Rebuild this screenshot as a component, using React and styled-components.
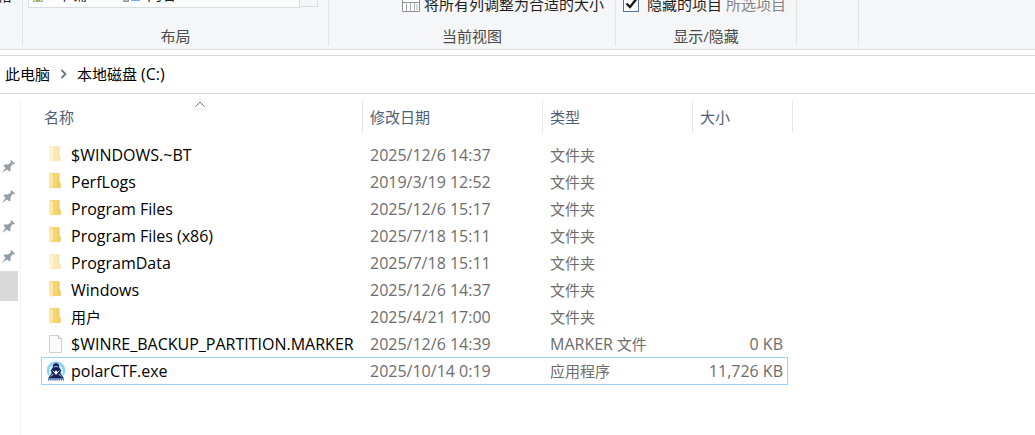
import { useState } from "react";
import styled, { createGlobalStyle } from "styled-components";

const GlobalStyle = createGlobalStyle`
  * {
    box-sizing: border-box;
  }
  body {
    margin: 0;
    background: #fff;
    color: #000;
    font-family: "Open Sans", "Noto Sans CJK SC", sans-serif;
    font-size: 15px;
    line-height: 20px;
  }
`;

const Window = styled.div`
  display: flex;
  flex-direction: column;
  min-height: 100vh;
  overflow: hidden;
`;

// 功能区
const Ribbon = styled.div`
  display: flex;
  height: 50px;
  padding-bottom: 3px;
  overflow: hidden;
  background: #f5f6f7;
  border-bottom: 1px solid #dadbdc;
`;

const Group = styled.section`
  display: flex;
  flex-direction: column;
  justify-content: flex-end;
  flex: 0 0 ${(props) => props.$width}px;
  min-width: 0;
  border-right: 1px solid #e2e3e4;
`;

const GroupBody = styled.div`
  display: flex;
  align-items: flex-end;
  justify-content: ${(props) => (props.$end ? "flex-end" : "flex-start")};
  padding: 0 10px 0 ${(props) => props.$indent || 0}px;
  margin-bottom: ${(props) => props.$gap || 12}px;
  white-space: nowrap;
`;

const GroupLabel = styled.div`
  height: 20px;
  text-align: center;
  color: #4a4a4a;
`;

const PaneButton = styled.button`
  flex: none;
  padding: 0;
  border: 0;
  background: none;
  color: #1e1e1e;
  font: inherit;
`;

const Gallery = styled.div`
  display: flex;
  align-items: flex-end;
  flex: 1;
  height: 30px;
  padding: 0 0 3px 4px;
  background: #fbfcfd;
  border: 1px solid #dadbdc;
`;

const GalleryItem = styled.button`
  display: flex;
  align-items: center;
  gap: 6px;
  width: 90px;
  height: 20px;
  padding: 0;
  border: 0;
  background: none;
  color: #1e1e1e;
  font: inherit;
`;

const GalleryScroll = styled.button`
  width: 18px;
  height: 29px;
  margin-bottom: 1px;
  padding: 0;
  border: 1px solid #dadbdc;
  border-left: 0;
  background: #f5f6f7;
`;

const ToolButton = styled.button`
  display: flex;
  align-items: center;
  gap: 4px;
  height: 20px;
  padding: 0;
  border: 0;
  background: none;
  color: ${(props) => (props.$muted ? "#838383" : "#1e1e1e")};
  font: inherit;
`;

const CheckLabel = styled.label`
  display: flex;
  align-items: center;
  gap: 8px;
  height: 20px;
  margin-right: 4px;
  color: #1e1e1e;
`;

const CheckBox = styled.span`
  display: grid;
  width: 16px;
  height: 16px;

  input,
  svg {
    grid-area: 1 / 1;
    width: 16px;
    height: 16px;
    margin: 0;
  }
  input {
    appearance: none;
    background: #fff;
    border: 1px solid #52719f;
  }
  svg {
    pointer-events: none;
    visibility: hidden;
  }
  input:checked + svg {
    visibility: visible;
  }
`;

// 地址栏
const AddressBar = styled.nav`
  display: flex;
  align-items: center;
  height: 39px;
  margin-top: 5px;
  padding: 0 0 2px 5px;
  border-top: 1px solid #d9d9d9;
  border-bottom: 1px solid #d9d9d9;

  a {
    color: #000;
    text-decoration: none;
  }
  svg {
    margin: 0 10px;
  }
`;

const Content = styled.div`
  display: flex;
  flex: 1;
  padding-top: 7px;
`;

const QuickAccess = styled.aside`
  display: flex;
  flex-direction: column;
  width: 21px;
  padding-top: 50px;
  border-right: 1px solid #f3f3f3;
`;

const PinButton = styled.button`
  display: flex;
  align-items: center;
  width: 18px;
  height: 30px;
  padding: 0 0 0 2px;
  border: 0;
  background: ${(props) => (props.$active ? "#d9d9d9" : "none")};
`;

const FileTable = styled.table`
  align-self: flex-start;
  table-layout: fixed;
  width: 752px;
  margin-left: 20px;
  border-collapse: separate;
  border-spacing: 0;
`;

const HeadCell = styled.th`
  position: relative;
  height: 32px;
  padding: 0 0 0 ${(props) => (props.$first ? 3 : 7)}px;
  border-right: 1px solid #e5e5e5;
  color: #4c607a;
  font-weight: 400;
  text-align: left;

  svg {
    position: absolute;
    top: 0;
    left: 50%;
    margin-left: -7px;
  }
`;

const Spacer = styled.tr`
  height: 8px;
`;

const Row = styled.tr`
  height: ${(props) => (props.$selected ? 28 : 27)}px;

  td {
    padding: 0 0 0 7px;
    color: #6d6d6d;
    white-space: nowrap;
    border: 0 solid #99d1ff;
    border-width: ${(props) => (props.$selected ? "1px 0" : "0")};
  }
  td:first-child {
    padding-left: ${(props) => (props.$selected ? 4 : 5)}px;
    border-left-width: ${(props) => (props.$selected ? 1 : 0)}px;
  }
  td:last-child {
    padding-right: ${(props) => (props.$selected ? 4 : 5)}px;
    border-right-width: ${(props) => (props.$selected ? 1 : 0)}px;
    text-align: right;
  }
`;

const FileName = styled.div`
  display: flex;
  align-items: center;
  gap: 5px;
  color: #000;

  svg {
    flex: none;
  }
`;

const Latin = styled.span`
  font-size: 16px;
`;

const files = [
  { name: "$WINDOWS.~BT", date: "2025/12/6 14:37", type: "文件夹", icon: "folder", hidden: true },
  { name: "PerfLogs", date: "2019/3/19 12:52", type: "文件夹", icon: "folder" },
  { name: "Program Files", date: "2025/12/6 15:17", type: "文件夹", icon: "folder" },
  { name: "Program Files (x86)", date: "2025/7/18 15:11", type: "文件夹", icon: "folder" },
  { name: "ProgramData", date: "2025/7/18 15:11", type: "文件夹", icon: "folder", hidden: true },
  { name: "Windows", date: "2025/12/6 14:37", type: "文件夹", icon: "folder" },
  { name: "用户", date: "2025/4/21 17:00", type: "文件夹", icon: "folder" },
  { name: "$WINRE_BACKUP_PARTITION.MARKER", date: "2025/12/6 14:39", type: "MARKER 文件", size: "0 KB", icon: "file" },
  { name: "polarCTF.exe", date: "2025/10/14 0:19", type: "应用程序", size: "11,726 KB", icon: "app" },
];

function FolderIcon({ faded }) {
  return (
    <svg width="20" height="20" viewBox="0 0 20 20" opacity={faded ? 0.5 : 1}>
      <path d="M3 1h10.500v9l1.200 1v5H6z" fill="#f6d673" />
      <path d="M11 2h2.500v8l1.200 1v4.500H11z" fill="#edc65c" opacity=".5" />
      <path d="M3 1l4 2v8.500L6 17.500 3 15.500z" fill="#ffe8a6" />
    </svg>
  );
}

function FileIcon() {
  return (
    <svg width="20" height="20" viewBox="0 0 20 20">
      <path d="M3.500 1.500h9l3 3v14h-12z" fill="#fafafa" stroke="#cfcfcf" />
      <path d="M12.500 1.500v3h3" fill="#fff" stroke="#bdbdbd" />
    </svg>
  );
}

function AppIcon() {
  return (
    <svg width="20" height="20" viewBox="0 0 20 20">
      <circle cx="10" cy="9.500" r="9.300" fill="#86d2f6" />
      <path d="M3 10a7 7 0 0 1 14 0v8H3z" fill="#cdeefc" />
      <path d="M10 2C7.500 2.300 6.600 4 6.800 6.500L4.800 9.500l1 2.500L2 17.500h16L14.200 12l1-2.500-2-3C13.400 4 12.500 2.300 10 2z" fill="#14205a" />
      <path d="M7.800 6.200q2.200-1.800 4.400 0" fill="none" stroke="#9db4dc" />
      <path d="M6.500 9.500l2 2M13.500 9.500l-2 2M4.800 15.500l2.500-2.500M15.200 15.500L12.700 13" stroke="#cfe6f8" />
      <path d="M10 9.300l2 2.200-2 2.500-2-2.500z" fill="#fff" />
      <path d="M2 18.500h16" stroke="#4a73ab" strokeWidth="2" strokeDasharray="1.500 .6" />
    </svg>
  );
}

function PinIcon() {
  return (
    <svg width="13" height="13" viewBox="0 0 13 13">
      <path d="M0 13l3.500-5L1.500 5.500l1-1h3.300L9 2.500 8.600.8 9.300 0 13 3.700l-.8.7-1.700-.4-2 3.200v3.300l-1 1L5 9.500z" fill="#929da6" />
    </svg>
  );
}

function GridIcon() {
  return (
    <svg width="18" height="16" viewBox="0 0 18 16">
      <path d="M.5.500h17v15H.5z" fill="#fdfdfd" stroke="#8e9296" />
      <path d="M1 6.500h16" stroke="#8e9296" />
      <path d="M4.500 6v9M8.500 6v9M12.500 6v9" stroke="#a9adb1" />
      <path d="M14 8h2v6h-2z" fill="#d7d9db" />
    </svg>
  );
}

function TileIcon() {
  return (
    <svg width="18" height="16" viewBox="0 0 18 16">
      <path d="M.5.500h9v15h-9z" fill="#e7eeb0" stroke="#a7aaad" />
      <path d="M3 11h4v4H3z" fill="#7dbb42" />
    </svg>
  );
}

function ContentIcon() {
  return (
    <svg width="18" height="16" viewBox="0 0 18 16">
      <path d="M.5.500h5v15h-5z" fill="#a6c4c2" stroke="#8e9a9f" />
      <path d="M2 11h3v3H2z" fill="#3c7468" />
      <path d="M8 14h9" stroke="#78aaf0" strokeWidth="2" />
    </svg>
  );
}

const icons = {
  folder: FolderIcon,
  file: FileIcon,
  app: AppIcon,
};

function App() {
  const [showHidden, setShowHidden] = useState(true);

  return (
    <Window>
      <GlobalStyle />
      <Ribbon>
        <Group $width={23}>
          <GroupBody $gap={41} $end>
            <PaneButton>详细信息窗格</PaneButton>
          </GroupBody>
        </Group>
        <Group $width={306}>
          <GroupBody $indent={5} $gap={18}>
            <Gallery>
              <GalleryItem>
                <TileIcon />
                平铺
              </GalleryItem>
              <GalleryItem>
                <ContentIcon />
                内容
              </GalleryItem>
            </Gallery>
            <GalleryScroll aria-label="更多布局" />
          </GroupBody>
          <GroupLabel>布局</GroupLabel>
        </Group>
        <Group $width={287}>
          <GroupBody $indent={73}>
            <ToolButton>
              <GridIcon />
              将所有列调整为合适的大小
            </ToolButton>
          </GroupBody>
          <GroupLabel>当前视图</GroupLabel>
        </Group>
        <Group $width={181}>
          <GroupBody $indent={7}>
            <CheckLabel>
              <CheckBox>
                <input
                  type="checkbox"
                  checked={showHidden}
                  onChange={(e) => setShowHidden(e.target.checked)}
                />
                <svg viewBox="0 0 16 16">
                  <path d="M3.500 7.500l3.500 3.500 6-7.500" fill="none" stroke="#1a1a1a" strokeWidth="2.400" />
                </svg>
              </CheckBox>
              隐藏的项目
            </CheckLabel>
            <ToolButton $muted>所选项目</ToolButton>
          </GroupBody>
          <GroupLabel>显示/隐藏</GroupLabel>
        </Group>
        <Group $width={62} />
      </Ribbon>

      {/* 地址栏 */}
      <AddressBar>
        <a href="#pc">此电脑</a>
        <svg width="7" height="10" viewBox="0 0 7 10">
          <path d="M1.500 1l4 4-4 4" fill="none" stroke="#767676" strokeWidth="1.800" />
        </svg>
        <a href="#c">
          本地磁盘 <Latin>(C:)</Latin>
        </a>
      </AddressBar>

      <Content>
        <QuickAccess>
          {[1, 2, 3, 4].map((pin) => (
            <PinButton key={pin} aria-label="已固定">
              <PinIcon />
            </PinButton>
          ))}
          <PinButton $active aria-label="此电脑" />
        </QuickAccess>

        {/* 文件列表 */}
        <FileTable>
          <colgroup>
            <col style={{ width: 322 }} />
            <col style={{ width: 180 }} />
            <col style={{ width: 150 }} />
            <col style={{ width: 95 }} />
            <col style={{ width: 5 }} />
          </colgroup>
          <thead>
            <tr>
              <HeadCell $first>
                名称
                <svg width="10" height="6" viewBox="0 0 10 6">
                  <path d="M.5 5.500L5 1l4.500 4.500" fill="none" stroke="#6d6d6d" />
                </svg>
              </HeadCell>
              <HeadCell>修改日期</HeadCell>
              <HeadCell>类型</HeadCell>
              <HeadCell colSpan={2}>大小</HeadCell>
            </tr>
          </thead>
          <tbody>
            <Spacer />
            {files.map((file) => {
              const Icon = icons[file.icon];
              const [kind, rest] = file.type.split(" ");
              return (
                <Row key={file.name} $selected={file.icon === "app"}>
                  <td>
                    <FileName>
                      <Icon faded={file.hidden} />
                      {file.name === "用户" ? file.name : <Latin>{file.name}</Latin>}
                    </FileName>
                  </td>
                  <td>
                    <Latin>{file.date}</Latin>
                  </td>
                  <td>
                    {rest ? (
                      <>
                        <Latin>{kind}</Latin> {rest}
                      </>
                    ) : (
                      kind
                    )}
                  </td>
                  <td>
                    <Latin>{file.size}</Latin>
                  </td>
                </Row>
              );
            })}
          </tbody>
        </FileTable>
      </Content>
    </Window>
  );
}

export default App;
